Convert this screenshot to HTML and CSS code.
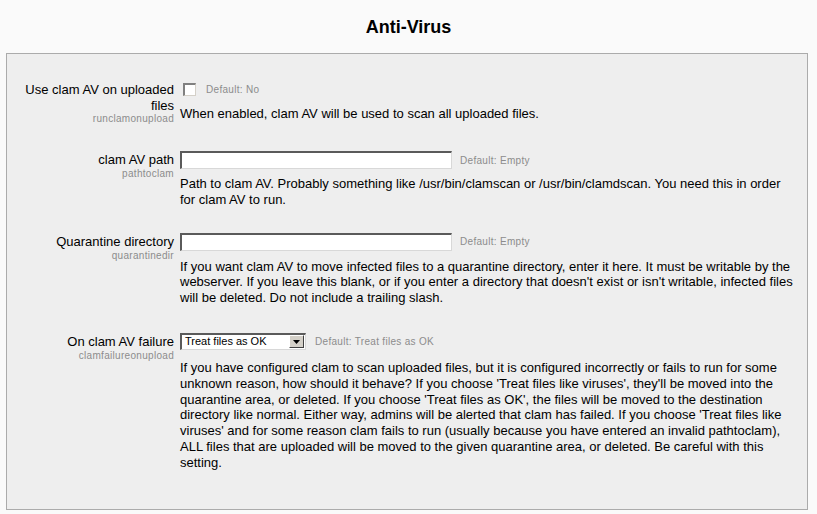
FILE: index.html
```html
<!DOCTYPE html>
<html>
<head>
<meta charset="utf-8">
<title>Anti-Virus</title>
<link rel="stylesheet" href="styles.css">
</head>
<body>
<h2 class="heading">Anti-Virus</h2>
<div class="panel">
  <div class="item item-check">
    <div class="label">Use clam AV on uploaded files<span class="name">runclamonupload</span></div>
    <div class="setting">
      <div class="control control-check"><input type="checkbox" class="checkbox"><span class="default">Default: No</span></div>
      <div class="desc">When enabled, clam AV will be used to scan all uploaded files.</div>
    </div>
  </div>
  <div class="item item-path">
    <div class="label">clam AV path<span class="name">pathtoclam</span></div>
    <div class="setting">
      <div class="control"><input type="text" class="text"><span class="default">Default: Empty</span></div>
      <div class="desc">Path to clam AV. Probably something like /usr/bin/clamscan or /usr/bin/clamdscan. You need this in order for clam AV to run.</div>
    </div>
  </div>
  <div class="item item-quar">
    <div class="label">Quarantine directory<span class="name">quarantinedir</span></div>
    <div class="setting">
      <div class="control"><input type="text" class="text"><span class="default">Default: Empty</span></div>
      <div class="desc">If you want clam AV to move infected files to a quarantine directory, enter it here. It must be writable by the webserver. If you leave this blank, or if you enter a directory that doesn't exist or isn't writable, infected files will be deleted. Do not include a trailing slash.</div>
    </div>
  </div>
  <div class="item item-fail">
    <div class="label">On clam AV failure<span class="name">clamfailureonupload</span></div>
    <div class="setting">
      <div class="control control-select">
        <div class="select"><span class="select-value">Treat files as OK</span><span class="select-btn"><svg width="7" height="4" viewBox="0 0 7 4"><path d="M0 0H7L3.5 4Z" fill="#000"/></svg></span></div>
        <span class="default">Default: Treat files as OK</span>
      </div>
      <div class="desc desc-fail">If you have configured clam to scan uploaded files, but it is configured incorrectly or fails to run for some unknown reason, how should it behave? If you choose 'Treat files like viruses', they'll be moved into the quarantine area, or deleted. If you choose 'Treat files as OK', the files will be moved to the destination directory like normal. Either way, admins will be alerted that clam has failed. If you choose 'Treat files like viruses' and for some reason clam fails to run (usually because you have entered an invalid pathtoclam), ALL files that are uploaded will be moved to the given quarantine area, or deleted. Be careful with this setting.</div>
    </div>
  </div>
</div>
</body>
</html>
```
FILE: styles.css
```css
html, body {
  margin: 0;
  padding: 0;
  background: #fafafa;
  font-family: "Liberation Sans", Arial, sans-serif;
  color: #000;
}
.heading {
  margin: 16px 0 15px;
  font-size: 18px;
  line-height: 22px;
  font-weight: bold;
  text-align: center;
  color: #000;
}
.panel {
  margin: 0 9px 0 6px;
  background: #eeeeee;
  border: 1px solid #ababab;
  padding: 27px 0 38px;
}
.item {
  display: grid;
  grid-template-columns: 167px 1fr;
  column-gap: 6px;
}
.item-check { margin-bottom: 26px; }
.item-path { margin-bottom: 25px; }
.item-quar { margin-bottom: 27px; }
.label {
  text-align: right;
  font-size: 13px;
  line-height: 16px;
  padding-top: 1px;
  color: #000;
}
.name {
  display: block;
  font-size: 10px;
  line-height: 12px;
  letter-spacing: 0.3px;
  color: #8c8c8c;
  margin-top: 0;
}
.item-check .name { margin-top: -1px; }
.setting {
  padding-right: 10px;
}
.control {
  display: flex;
  align-items: center;
  height: 18px;
}
.control-check { height: 14px; padding-top: 1px; }
.control-select { height: 17px; }
.checkbox {
  appearance: none;
  -webkit-appearance: none;
  margin: 0 0 0 3px;
  width: 13px;
  height: 13px;
  background: #fff;
  border-top: 2px solid #808080;
  border-left: 2px solid #808080;
  border-right: 1px solid #d4d0c8;
  border-bottom: 1px solid #d4d0c8;
  box-sizing: border-box;
}
.text {
  width: 272px;
  height: 18px;
  box-sizing: border-box;
  margin: 0;
  padding: 0 2px;
  background: #fff;
  border-top: 2px solid #5a5a5a;
  border-left: 2px solid #5a5a5a;
  border-right: 1px solid #d8d8d8;
  border-bottom: 1px solid #d8d8d8;
  outline: none;
}
.default {
  font-size: 10px;
  letter-spacing: 0.3px;
  color: #8c8c8c;
  margin-left: 8px;
}
.control-check .default { margin-left: 10px; }
.control-select .default { margin-left: 9px; }
.select {
  width: 126px;
  height: 17px;
  box-sizing: border-box;
  background: #fff;
  border-top: 2px solid #5a5a5a;
  border-left: 2px solid #5a5a5a;
  border-right: 1px solid #d8d8d8;
  border-bottom: 1px solid #d8d8d8;
  display: flex;
  align-items: center;
  justify-content: space-between;
}
.select-value {
  font-size: 11px;
  line-height: 13px;
  padding-left: 3px;
}
.select-btn {
  width: 15px;
  height: 13px;
  margin-right: 1px;
  box-sizing: border-box;
  background: #d4d0c8;
  border-top: 1px solid #fff;
  border-left: 1px solid #fff;
  border-right: 1px solid #404040;
  border-bottom: 1px solid #404040;
  display: flex;
  align-items: center;
  justify-content: center;
}
.select-btn svg { display: block; }
.desc {
  font-size: 13px;
  line-height: 15.8px;
  margin-top: 7px;
  color: #000;
}
.item-check .desc { margin-top: 10px; }
.item-quar .desc { margin-top: 8px; }
.desc-fail { margin-top: 10px; }
```
